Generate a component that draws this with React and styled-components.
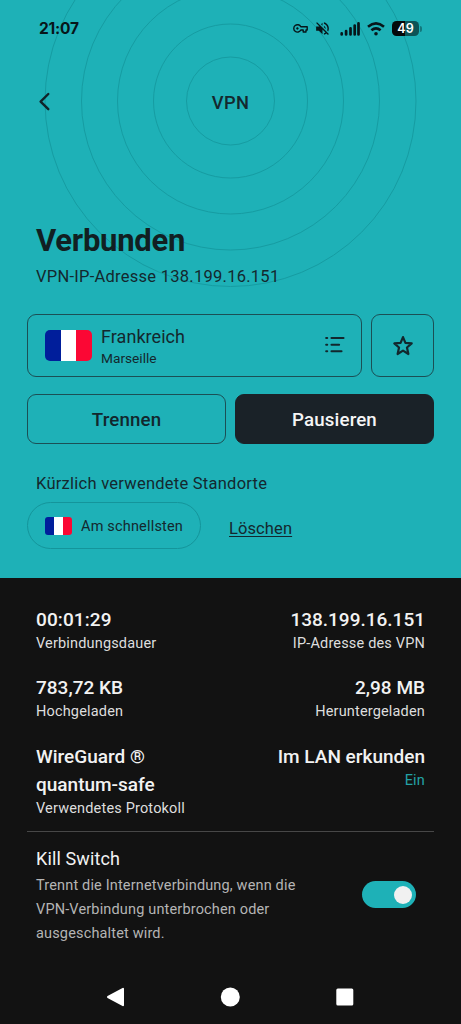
import React from "react";
import styled, { createGlobalStyle } from "styled-components";
import { MdVolumeOff } from "react-icons/md";

const App = () => {
  return (
    <Screen>
      <GlobalStyle />
      <Hero>
        <Rings viewBox="0 0 461 300">
          {[44, 77, 113, 149, 185.5].map((r) => (
            <circle key={r} cx="230.5" cy="101" r={r} />
          ))}
        </Rings>
        <StatusBar>
          <Clock>21:07</Clock>
          <StatusIcons>
            <VpnKey />
            <MuteIcon size={17} />
            <Signal />
            <Wifi />
            <Battery />
          </StatusIcons>
        </StatusBar>
        <TopBar>
          <BackIcon viewBox="0 0 12 20">
            <path d="M10.3 2 L2.6 9.6 L10.3 17.2" />
          </BackIcon>
          <PageTitle>VPN</PageTitle>
        </TopBar>
        <Heading>Verbunden</Heading>
        <Address>VPN-IP-Adresse 138.199.16.151</Address>
        <LocationRow>
          <LocationCard>
            <Flag $w={47} $h={31} $r={5} />
            <Place>
              <Country>Frankreich</Country>
              <City>Marseille</City>
            </Place>
            <ListIcon viewBox="0 0 20 18">
              <path d="M1.2 2h1M6.5 2h12M1.2 8.7h1M6.5 8.7h7.6M1.2 15.2h1M6.5 15.2h10" />
            </ListIcon>
          </LocationCard>
          <FavoriteButton>
            <StarIcon viewBox="0 0 20 20">
              <path d="M10 1.9 L12.2 7.1 L17.9 7.6 L13.6 11.4 L14.9 17.3 L10 14.2 L5.1 17.3 L6.4 11.4 L2.1 7.6 L7.8 7.1 Z" />
            </StarIcon>
          </FavoriteButton>
        </LocationRow>
        <ButtonRow>
          <Button>Trennen</Button>
          <Button $filled>Pausieren</Button>
        </ButtonRow>
        <RecentTitle>Kürzlich verwendete Standorte</RecentTitle>
        <RecentRow>
          <Chip>
            <Flag $w={27} $h={18} $r={3} />
            <ChipLabel>Am schnellsten</ChipLabel>
          </Chip>
          <ClearLink>Löschen</ClearLink>
        </RecentRow>
      </Hero>

      <Stats>
        <Stat>
          <Value $ls={0.1}>00:01:29</Value>
          <Label>Verbindungsdauer</Label>
        </Stat>
        <Stat $right>
          <Value>138.199.16.151</Value>
          <Label>IP-Adresse des VPN</Label>
        </Stat>
        <Stat>
          <Value>783,72 KB</Value>
          <Label>Hochgeladen</Label>
        </Stat>
        <Stat $right>
          <Value>2,98 MB</Value>
          <Label>Heruntergeladen</Label>
        </Stat>
        <Stat>
          <Value>
            WireGuard ®<br />
            quantum-safe
          </Value>
          <Label>Verwendetes Protokoll</Label>
        </Stat>
        <Stat $right>
          <Value>Im LAN erkunden</Value>
          <Label $accent>Ein</Label>
        </Stat>
      </Stats>

      <KillSwitch>
        <div>
          <KillTitle>Kill Switch</KillTitle>
          <KillInfo>
            Trennt die Internetverbindung, wenn die
            <br />
            VPN-Verbindung unterbrochen oder
            <br />
            ausgeschaltet wird.
          </KillInfo>
        </div>
        <Toggle>
          <Thumb />
        </Toggle>
      </KillSwitch>

      <NavBar>
        <NavIcon viewBox="0 0 20 20">
          <path d="M3 10 L18 1.8 V18.2 Z" strokeWidth="2" />
        </NavIcon>
        <NavIcon viewBox="0 0 20 20">
          <circle cx="10.3" cy="10" r="9.5" />
        </NavIcon>
        <NavIcon viewBox="0 0 20 20">
          <rect x="1.3" y="1.5" width="17" height="17" rx="1.5" />
        </NavIcon>
      </NavBar>
    </Screen>
  );
};

export default App;

const VpnKey = () => (
  <KeySvg viewBox="0 0 15 11">
    <path d="M7.8 3.8 H14.2 V7 H13 V9 H10.2 V7 H7.8 A3.7 3.7 0 1 1 7.8 3.8 Z" />
    <circle cx="4.4" cy="5.4" r="0.9" />
  </KeySvg>
);

const Signal = () => (
  <SignalSvg viewBox="0 0 20 14">
    <path d="M1.7 11.4v1M6.1 9v3.4M10.5 6.3v6.1M14.7 3.6v8.8M18.5 1.4v11" />
  </SignalSvg>
);

const Wifi = () => (
  <WifiSvg viewBox="0 0 18 14">
    <path d="M1 4.7 Q9 -2 17 4.7" />
    <path d="M4.4 8.3 Q9 4.5 13.6 8.3" />
    <circle cx="9" cy="11.7" r="1.8" />
  </WifiSvg>
);

const Battery = () => (
  <BatteryWrap>
    <BatteryBody>49</BatteryBody>
    <BatteryTip />
  </BatteryWrap>
);

const GlobalStyle = createGlobalStyle`
  body {
    margin: 0;
    background: #121212;
  }
  * {
    box-sizing: border-box;
  }
`;

const Screen = styled.div`
  width: 461px;
  height: 1024px;
  overflow: hidden;
  display: flex;
  flex-direction: column;
  background: #121212;
  color: #f2f2f2;
  font-family: Roboto, "Liberation Sans", sans-serif;
  white-space: nowrap;
`;

const Hero = styled.section`
  position: relative;
  height: 578px;
  padding: 0 27px;
  background: #1eb1b7;
  color: #14282e;
  flex-shrink: 0;
`;

/* rings lie behind the header and the heading */
const Rings = styled.svg`
  position: absolute;
  top: 0;
  left: 0;
  width: 461px;
  height: 300px;
  fill: none;
  stroke: #169ca2;
  stroke-width: 1;
`;

const StatusBar = styled.div`
  position: relative;
  display: flex;
  align-items: center;
  justify-content: space-between;
  height: 57px;
  padding: 0 12px 0 12px;
  color: #07161a;
`;

const Clock = styled.span`
  font-family: Inter, sans-serif;
  font-size: 15.5px;
  font-weight: 650;
  letter-spacing: -0.2px;
`;

const StatusIcons = styled.div`
  display: flex;
  align-items: center;
`;

const KeySvg = styled.svg`
  width: 15px;
  height: 11px;
  fill: none;
  stroke: currentColor;
  stroke-width: 1.4;
  stroke-linejoin: round;

  circle {
    fill: currentColor;
    stroke-width: 0.6;
  }
`;

const MuteIcon = styled(MdVolumeOff)`
  margin: 0 9px 0 6px;
`;

const SignalSvg = styled.svg`
  width: 20px;
  height: 14px;
  margin-right: 7px;
  fill: none;
  stroke: currentColor;
  stroke-width: 2.7;
  stroke-linecap: round;
`;

const WifiSvg = styled.svg`
  width: 18px;
  height: 14px;
  margin-right: 7px;
  fill: none;
  stroke: currentColor;
  stroke-width: 2.6;

  circle {
    fill: currentColor;
    stroke: none;
  }
`;

const BatteryWrap = styled.div`
  display: flex;
  align-items: center;
  gap: 1px;
`;

const BatteryBody = styled.div`
  width: 27px;
  height: 15px;
  border-radius: 4.5px;
  background: linear-gradient(90deg, #04090b 50%, #0d5457 50%);
  color: #fff;
  font-family: Inter, sans-serif;
  font-size: 12.5px;
  font-weight: 600;
  line-height: 15px;
  text-align: center;
`;

const BatteryTip = styled.div`
  width: 2px;
  height: 6px;
  border-radius: 0 2px 2px 0;
  background: #12787c;
`;

const TopBar = styled.div`
  position: relative;
  display: grid;
  grid-template-columns: 1fr auto 1fr;
  align-items: center;
  height: 90px;
  padding: 0 11px;
`;

const BackIcon = styled.svg`
  width: 12px;
  height: 20px;
  fill: none;
  stroke: #10242a;
  stroke-width: 2.4;
  stroke-linecap: round;
  stroke-linejoin: round;
`;

const PageTitle = styled.h1`
  margin: 0;
  font-size: 18.3px;
  font-weight: 500;
  letter-spacing: 0.3px;
`;

const Heading = styled.h2`
  position: relative;
  margin: 75px 0 0 9px;
  font-size: 31px;
  font-weight: 700;
  line-height: 37px;
  letter-spacing: -0.25px;
  color: #111f22;
`;

const Address = styled.p`
  position: relative;
  margin: 6px 0 25px 9px;
  font-size: 16.5px;
  line-height: 24px;
  letter-spacing: 0.26px;
`;

const LocationRow = styled.div`
  display: flex;
  gap: 9px;
  height: 63px;
`;

const Outlined = styled.div`
  display: flex;
  align-items: center;
  border: 1px solid #1b4f55;
  border-radius: 9px;
`;

const LocationCard = styled(Outlined)`
  flex: 1;
  padding: 0 16px 0 17px;
`;

const FavoriteButton = styled(Outlined)`
  width: 63px;
  justify-content: center;
`;

const Flag = styled.div`
  width: ${(p) => p.$w}px;
  height: ${(p) => p.$h}px;
  border-radius: ${(p) => p.$r}px;
  background: linear-gradient(
    90deg,
    #001e9b 33.3%,
    #fff 33.3% 66.6%,
    #fb0734 66.6%
  );
`;

const Place = styled.div`
  flex: 1;
  margin: 3px 0 0 9px;
`;

const Country = styled.div`
  font-size: 18px;
  line-height: 22px;
  letter-spacing: 0.05px;
`;

const City = styled.div`
  font-size: 13.7px;
  line-height: 20px;
`;

const ListIcon = styled.svg`
  width: 20px;
  height: 18px;
  margin-bottom: 1px;
  fill: none;
  stroke: #12272d;
  stroke-width: 2.1;
  stroke-linecap: round;
`;

const StarIcon = styled.svg`
  width: 22px;
  height: 22px;
  fill: none;
  stroke: #12272d;
  stroke-width: 2;
  stroke-linejoin: round;
`;

const ButtonRow = styled.div`
  display: grid;
  grid-template-columns: 1fr 1fr;
  gap: 9px;
  margin-top: 17px;
`;

const Button = styled.button`
  height: 50px;
  padding: 2px 0 0;
  border: 1px solid ${(p) => (p.$filled ? "#1a2228" : "#1b4f55")};
  border-radius: 9px;
  background: ${(p) => (p.$filled ? "#1a2228" : "transparent")};
  color: ${(p) => (p.$filled ? "#f5f5f5" : "#12272d")};
  font-family: inherit;
  font-size: 18.7px;
  font-weight: 500;
  letter-spacing: 0.15px;
`;

const RecentTitle = styled.h3`
  margin: 27px 0 6px 9px;
  padding-top: 1px;
  font-size: 16.5px;
  font-weight: 400;
  line-height: 24px;
  letter-spacing: 0.25px;
`;

const RecentRow = styled.div`
  display: flex;
  align-items: center;
`;

const Chip = styled.div`
  display: flex;
  align-items: center;
  width: 174px;
  height: 47px;
  padding-left: 17px;
  border: 1px solid #14959b;
  border-radius: 24px;
`;

const ChipLabel = styled.span`
  margin: 3px 0 0 9px;
  font-size: 14.5px;
  line-height: 20px;
  letter-spacing: 0.18px;
`;

const ClearLink = styled.a`
  margin: 6px 0 0 28px;
  font-size: 16.5px;
  line-height: 24px;
  letter-spacing: 0.1px;
  text-decoration: underline;
  text-decoration-thickness: 1px;
  text-underline-offset: 2px;
  text-decoration-skip-ink: none;
`;

const Stats = styled.section`
  display: grid;
  grid-template-columns: auto auto;
  justify-content: space-between;
  row-gap: 21.5px;
  height: 253px;
  align-content: start;
  padding: 27.6px 36px 0;
`;

const Stat = styled.div`
  text-align: ${(p) => (p.$right ? "right" : "left")};
`;

const Value = styled.div`
  font-size: 19px;
  font-weight: 500;
  line-height: 28px;
  letter-spacing: ${(p) => p.$ls || 0}px;
`;

const Label = styled.div`
  font-size: 14.5px;
  line-height: 19px;
  letter-spacing: 0.17px;
  color: ${(p) => (p.$accent ? "#23a3a6" : "#dedede")};
`;

const KillSwitch = styled.section`
  display: flex;
  justify-content: space-between;
  margin: 0 27px;
  padding: 15px 18px 0 9px;
  height: 139px;
  border-top: 1px solid #474747;
`;

const KillTitle = styled.div`
  font-size: 18px;
  line-height: 24px;
  letter-spacing: 0.12px;
`;

const KillInfo = styled.p`
  margin: 3px 0 0;
  font-size: 14.5px;
  line-height: 24px;
  letter-spacing: 0.16px;
  color: #b5b5b5;
`;

const Toggle = styled.div`
  display: flex;
  align-items: center;
  justify-content: flex-end;
  width: 54px;
  height: 27px;
  margin-top: 34px;
  padding-right: 4px;
  border-radius: 14px;
  background: #1eb1b7;
`;

const Thumb = styled.div`
  width: 18px;
  height: 18px;
  border-radius: 50%;
  background: #f1f1f1;
`;

const NavBar = styled.nav`
  display: flex;
  justify-content: space-between;
  align-items: center;
  height: 54px;
  padding: 0 106px 0 105px;
`;

const NavIcon = styled.svg`
  width: 20px;
  height: 20px;
  fill: #fff;

  path {
    stroke: #fff;
    stroke-linejoin: round;
  }
`;
